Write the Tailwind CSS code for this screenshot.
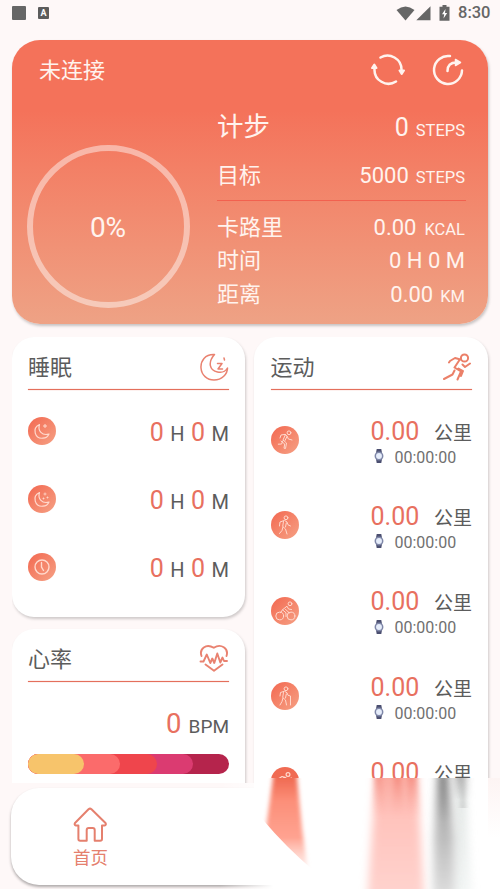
<!DOCTYPE html>
<html lang="zh-CN">
<head>
<meta charset="utf-8">
<title>首页</title>
<script src="https://cdn.jsdelivr.net/npm/@tailwindcss/browser@4"></script>
</head>
<body class="bg-[#fef8f8]">
<svg class="hidden">
  <defs>
    <symbol id="watch" viewBox="0 0 10 14"><path d="M2.700 0h4.600l.7 4H2zM2 10h6l-.7 4H2.700z" fill="#4b4f70"/><circle cx="5" cy="7" r="3.700" fill="#e6edfb" stroke="#7f87a8" stroke-width="1.500"/></symbol>
    <symbol id="run" viewBox="0 0 28 28"><g fill="none" stroke="#ffd9cd" stroke-width="1" stroke-linecap="round" stroke-linejoin="round"><circle cx="18" cy="6.800" r="1.900"/><path d="M9 12l1-3 4-.6 2 1.600 1.400 3 3.600 1M14.500 8.500l-2.500 5.500 3.500 3-1 5.500-1.500-.3.7-4.200-3.700-3M11.500 15l-.8 3-3.400.2M16 10.500l-2 4"/></g></symbol>
    <symbol id="row" viewBox="0 0 28 28"><g fill="none" stroke="#ffd9cd" stroke-width="1.200" stroke-linecap="round" stroke-linejoin="round"><circle cx="17" cy="7.500" r="1.900"/><path d="M8 11.500l3-2 3 .8 2.500 2.200 4-1.500M13 10.500l-2.500 4.500M8 11.500l-1 2"/></g></symbol>
    <symbol id="walk" viewBox="0 0 28 28"><g fill="none" stroke="#ffd9cd" stroke-width="1" stroke-linecap="round" stroke-linejoin="round"><circle cx="15" cy="6.800" r="1.900"/><path d="M8.500 15l.5-4 4.500-1.600 2.500 1.600 1 2.800 2.500 1.200M12.500 10.500l-.8 5 2.800 2.500 1.500 5M12 16l-1 3.500-2.500 3M15.300 12l-.8 4"/></g></symbol>
    <symbol id="bike" viewBox="0 0 28 28"><g fill="none" stroke="#ffd9cd" stroke-width="1" stroke-linecap="round" stroke-linejoin="round"><circle cx="8.700" cy="19" r="3.900"/><circle cx="20" cy="19" r="3.900"/><circle cx="19" cy="6.800" r="1.900"/><path d="M20.500 12.500l-3-.5-1.500-2.800-4.500 3.600 3.500 3v3.700M11.500 12.800l-2 3M14.500 12.500l2 1.500 1.500 2"/></g></symbol>
    <symbol id="hike" viewBox="0 0 28 28"><g fill="none" stroke="#ffd9cd" stroke-width="1" stroke-linecap="round" stroke-linejoin="round"><circle cx="15" cy="6.800" r="1.900"/><path d="M9 14l.5-3.500 4-1.300 2.500 1.600 1 2.500 2.500.7v9M12.500 10.500l-.8 5 2.800 2.500 1 5M12 16l-1 3.500-2 3.500M15.300 12l-.8 4"/></g></symbol>
    <symbol id="moon" viewBox="0 0 28 28"><path d="M11.500 7.500c-8 4-4.500 14.500 3.500 13.700 3 0 4.800-1.700 6-4.200-7 2-11.500-3-9.500-9.500z" fill="none" stroke="#ffd9cd" stroke-width="1.200" stroke-linejoin="round"/></symbol>
  </defs>
</svg>
<div class="relative h-[889px] w-[500px] overflow-hidden font-[Roboto,'Noto_Sans_CJK_SC',sans-serif]">

  <!-- status bar -->
  <div class="flex h-[26px] items-center pl-3 pr-[9px] text-[#666]">
    <div class="h-[14px] w-[14px] rounded-[1px] bg-[#666]"></div>
    <div class="ml-[12px] flex h-[12px] w-[11px] items-center justify-center rounded-[1px] bg-[#5c5c5c] text-[9px] font-bold leading-none text-white">A</div>
    <svg class="ml-auto" width="19" height="15" viewBox="0 0 19 15"><path d="M0.500 4Q9.500-3 18.500 4L9.500 14.500z" fill="#666"/></svg>
    <svg class="ml-[1px]" width="15" height="15" viewBox="0 0 15 15"><path d="M14.500 .3v14H.3z" fill="#666"/></svg>
    <svg class="ml-[8px]" width="11" height="16" viewBox="0 0 11 16"><path d="M3.500 0h4v1.700h3v14H.5v-14h3z" fill="#666"/><path d="M6.500 4L3 9.300h2.200L4.500 13.500 8.200 8H6z" fill="#fff"/></svg>
    <span class="ml-[8px] w-[33px] whitespace-nowrap text-[16.5px] font-medium leading-[26px]">8:30</span>
  </div>

  <!-- steps card -->
  <section class="ml-3 mt-[14px] h-[284px] w-[476px] rounded-[28px] bg-linear-to-b from-[#f4725a] from-25% to-[#eea285] text-[#fff3ee] shadow-[1px_2px_3px_#00000038]">
    <div class="flex h-[60px] items-center pl-[27px] pr-[23px]">
      <span class="mt-[2px] text-[22px] leading-[30px]">未连接</span>
      <svg class="ml-auto" width="36" height="34" viewBox="0 0 36 34" fill="none" stroke="#fff3ee" stroke-width="2.500" stroke-linecap="round" stroke-linejoin="round"><path d="M10.500 4.500a14 14 0 0 1 21 12M26 28.500A14 14 0 0 1 4.500 16"/><path d="M29.500 17.500h4.500l-2.300 3.500zM2 15h4.500L4.300 11.500z" fill="#fff3ee" stroke-width="2"/></svg>
      <svg class="ml-[25px]" width="34" height="34" viewBox="0 0 34 34" fill="none" stroke="#fff3ee" stroke-width="2.500" stroke-linecap="round" stroke-linejoin="round"><path d="M19 3.100A14 14 0 1 0 31 17.500M16.500 18c0-6 3-8.500 9-8.500"/><path d="M24.500 6.500v6l5-3z" fill="#fff3ee" stroke-width="1.500"/></svg>
    </div>
    <div class="flex">
      <div class="ml-[15px] mt-[45px] flex h-[163px] w-[163px] items-center justify-center rounded-full border-[6.5px] border-white/45 pr-px pt-[2px] text-[28px] leading-[34px]">0%</div>
      <div class="ml-[27px] mt-[10px] w-[249px] text-[22px] leading-[33px]">
        <div class="flex h-[49px] items-baseline pr-px text-[25px] leading-[34px]"><span class="text-[26.5px]">计步</span><span class="ml-auto">0</span><span class="ml-[7px] text-[16.5px]">STEPS</span></div>
        <div class="flex h-[41px] items-baseline pr-px"><span>目标</span><span class="ml-auto">5000</span><span class="ml-[7px] text-[16.5px]">STEPS</span></div>
        <div class="mb-[10px] h-px bg-[#f2614f]"></div>
        <div class="flex h-[33px] items-baseline pr-px"><span>卡路里</span><span class="ml-auto">0.00</span><span class="ml-[8px] text-[16.5px]">KCAL</span></div>
        <div class="flex h-[33.5px] items-baseline pr-px"><span>时间</span><span class="ml-auto">0 H 0 M</span></div>
        <div class="flex h-[33px] items-baseline pr-px"><span>距离</span><span class="ml-auto">0.00</span><span class="ml-[7px] text-[16.5px]">KM</span></div>
      </div>
    </div>
  </section>

  <div class="ml-3 mt-[13px] flex h-[446px] gap-[9px] overflow-hidden pr-1 text-[#5c5c5c]">
    <div class="w-[233px] shrink-0">
      <!-- sleep card -->
      <section class="h-[280px] rounded-[22px] bg-white px-4 pt-px shadow-[1px_2px_3px_#00000030]">
        <div class="flex h-[51px] items-center pt-[8px]">
          <span class="text-[22px] leading-[30px]">睡眠</span>
          <svg class="ml-auto" width="29" height="29" viewBox="0 0 29 29" fill="none" stroke="#e98270" stroke-width="1.500" stroke-linejoin="round" stroke-linecap="round"><path d="M14.500 1.500C5 1 .5 8 1 15c.5 7 6 12 13 12 8 0 13.500-6 13.500-12-2 3.500-6 4.800-10 4-8-1.500-10-9.500-3-17.500z"/><path d="M17.500 10.500h4.500l-4 5.500h4.500M24 5l.5 2"/></svg>
        </div>
        <div class="h-px bg-[#e46f5c] shadow-[0_0_1px_#e46f5c]"></div>
        <div class="mt-[8px] flex h-[68px] items-center text-[20px] leading-[32px]">
          <div class="mr-auto mt-[-2px] flex h-7 w-7 rounded-full bg-linear-to-br from-[#f26750] to-[#f5a084]"><svg width="28" height="28"><use href="#moon"/><path d="M17 7v4M15 9h4" stroke="#ffd9cd"/></svg></div>
          <div class="mt-[3px] flex items-baseline gap-[6.5px]"><span class="text-[25px] text-[#e8705f]">0</span><span>H</span><span class="text-[25px] text-[#e8705f]">0</span><span>M</span></div>
        </div>
        <div class="flex h-[68px] items-center text-[20px] leading-[32px]">
          <div class="mr-auto mt-[-2px] flex h-7 w-7 rounded-full bg-linear-to-br from-[#f26750] to-[#f5a084]"><svg width="28" height="28"><use href="#moon"/><path d="M17 7.500v3M15.500 9h3M19.500 11.500v2M18.500 12.500h2M15.500 12.500v2M14.500 13.500h2" stroke="#ffd9cd" stroke-width=".8"/></svg></div>
          <div class="mt-[3px] flex items-baseline gap-[6.5px]"><span class="text-[25px] text-[#e8705f]">0</span><span>H</span><span class="text-[25px] text-[#e8705f]">0</span><span>M</span></div>
        </div>
        <div class="flex h-[68px] items-center text-[20px] leading-[32px]">
          <div class="mr-auto mt-[-2px] flex h-7 w-7 rounded-full bg-linear-to-br from-[#f26750] to-[#f5a084]"><svg width="28" height="28" fill="none" stroke="#ffd9cd" stroke-width="1.400" stroke-linecap="round"><circle cx="14" cy="14" r="7"/><path d="M13.500 9.500V14l2 3.500"/></svg></div>
          <div class="mt-[3px] flex items-baseline gap-[6.5px]"><span class="text-[25px] text-[#e8705f]">0</span><span>H</span><span class="text-[25px] text-[#e8705f]">0</span><span>M</span></div>
        </div>
      </section>
      <!-- heart rate card -->
      <section class="mt-3 h-[200px] rounded-[22px] bg-white px-4 pt-px shadow-[1px_2px_3px_#00000030]">
        <div class="flex h-[51px] items-center pt-[8px]">
          <span class="text-[22px] leading-[30px]">心率</span>
          <svg class="ml-auto mt-[-4px]" width="30" height="28" viewBox="0 0 30 28" fill="none" stroke="#e98270" stroke-width="1.900" stroke-linejoin="round" stroke-linecap="round"><path d="M2.500 12C0 5 7 -1 14.800 3.800 22 -1 30 4.500 27.500 12M6.500 20.500l8.500 6.300 8.500-6.300"/><path d="M1.500 17.500h3l3.300-7 3.500 8.500 2-4.500 2 4.500 3-9.500 3 9 2.200-5 1.500 3.500h3"/></svg>
        </div>
        <div class="h-px bg-[#e46f5c] shadow-[0_0_1px_#e46f5c]"></div>
        <div class="mt-[24px] flex h-[36px] items-baseline justify-end text-[19px] leading-[36px]"><span class="text-[27.5px] text-[#e8705f]">0</span><span class="ml-[7px]">BPM</span></div>
        <div class="mt-[12px] flex h-5 w-[201px] overflow-hidden rounded-full bg-[linear-gradient(90deg,#f7c46b_40px,#b5244c_40px)]">
          <div class="h-5 w-[164.5px] rounded-r-full bg-[#db3b71]"><div class="h-5 w-[129px] rounded-r-full bg-[#ef454c]"><div class="h-5 w-[92px] rounded-r-full bg-[#fb6b6b]"><div class="h-5 w-[56px] rounded-r-full bg-[#f7c46b]"></div></div></div></div>
        </div>
      </section>
    </div>

    <!-- sport card -->
    <section class="h-[520px] w-[233.5px] shrink-0 rounded-[22px] bg-white pl-[16.5px] pr-[15.5px] pt-px shadow-[1px_2px_3px_#00000030]">
      <div class="flex h-[51px] items-center pt-[8px]">
        <span class="text-[22px] leading-[30px]">运动</span>
        <svg class="ml-auto" width="29" height="29" viewBox="0 0 29 29" fill="none" stroke="#eb8069" stroke-width="2" stroke-linecap="round" stroke-linejoin="round"><circle cx="21.500" cy="5" r="3.600"/><path d="M7 8l5-3 5.500 1.500M7 8l-1 1.500M16.500 7l-5 7.500 6.500 4-3.500 8M11.500 17.500l-2 4-8.500 4.500M19.500 11.500l2.500 2.500 5-3.500M15.500 15.500l4.500 2.500-2 5"/></svg>
      </div>
      <div class="mb-[10px] h-px bg-[#e46f5c] shadow-[0_0_1px_#e46f5c]"></div>
      <div class="flex h-[85.3px] items-center"><div class="mt-[-5px] h-7 w-7 rounded-full bg-linear-to-br from-[#f26750] to-[#f5a084]"><svg width="28" height="28"><use href="#run"/></svg></div>
        <div class="ml-auto w-[101.5px]"><div class="flex h-[30px] items-baseline justify-between pt-px leading-[29px]"><span class="text-[25px] text-[#e8705f]">0.00</span><span class="text-[19px]">公里</span></div><div class="flex items-center text-[16px] leading-6 text-[#707070]"><svg class="ml-[3px] mr-[11px] mt-[-3px]" width="10" height="14"><use href="#watch"/></svg>00:00:00</div></div></div>
      <div class="flex h-[85.3px] items-center"><div class="mt-[-5px] h-7 w-7 rounded-full bg-linear-to-br from-[#f26750] to-[#f5a084]"><svg width="28" height="28"><use href="#walk"/></svg></div>
        <div class="ml-auto w-[101.5px]"><div class="flex h-[30px] items-baseline justify-between pt-px leading-[29px]"><span class="text-[25px] text-[#e8705f]">0.00</span><span class="text-[19px]">公里</span></div><div class="flex items-center text-[16px] leading-6 text-[#707070]"><svg class="ml-[3px] mr-[11px] mt-[-3px]" width="10" height="14"><use href="#watch"/></svg>00:00:00</div></div></div>
      <div class="flex h-[85.3px] items-center"><div class="mt-[-5px] h-7 w-7 rounded-full bg-linear-to-br from-[#f26750] to-[#f5a084]"><svg width="28" height="28"><use href="#bike"/></svg></div>
        <div class="ml-auto w-[101.5px]"><div class="flex h-[30px] items-baseline justify-between pt-px leading-[29px]"><span class="text-[25px] text-[#e8705f]">0.00</span><span class="text-[19px]">公里</span></div><div class="flex items-center text-[16px] leading-6 text-[#707070]"><svg class="ml-[3px] mr-[11px] mt-[-3px]" width="10" height="14"><use href="#watch"/></svg>00:00:00</div></div></div>
      <div class="flex h-[85.3px] items-center"><div class="mt-[-5px] h-7 w-7 rounded-full bg-linear-to-br from-[#f26750] to-[#f5a084]"><svg width="28" height="28"><use href="#hike"/></svg></div>
        <div class="ml-auto w-[101.5px]"><div class="flex h-[30px] items-baseline justify-between pt-px leading-[29px]"><span class="text-[25px] text-[#e8705f]">0.00</span><span class="text-[19px]">公里</span></div><div class="flex items-center text-[16px] leading-6 text-[#707070]"><svg class="ml-[3px] mr-[11px] mt-[-3px]" width="10" height="14"><use href="#watch"/></svg>00:00:00</div></div></div>
      <div class="flex h-[85.3px] items-center"><div class="mt-[-5px] h-7 w-7 rounded-full bg-[#f06b53]"><svg width="28" height="28"><use href="#row"/></svg></div>
        <div class="ml-auto w-[101.5px]"><div class="flex h-[54px] items-baseline justify-between pt-px leading-[29px]"><span class="text-[25px] text-[#e8705f]">0.00</span><span class="text-[19px]">公里</span></div></div></div>
    </section>
  </div>

  <!-- bottom navigation, over the scrolling content -->
  <nav class="absolute left-[11px] top-[788px] flex h-[97px] w-[320px] flex-col rounded-[28px] bg-white pl-[62px] pt-[18.5px] text-[#e5806e] shadow-[0_2px_3px_#00000050]">
    <svg width="34" height="35" viewBox="0 0 34 35" fill="none" stroke="currentColor" stroke-width="2" stroke-linejoin="round" stroke-linecap="round"><path d="M15.500 2.200q1.500-1.200 3 0L32.500 16q1 2-1 2.500h-2.500V32q0 1.800-1.800 1.800h-5.500V23q0-2-2-2h-4q-2 0-2 2v10.800H7.200q-1.800 0-1.800-1.800V18.500H3q-2-.5-1-2.500z"/></svg>
    <span class="mt-[3px] text-[17.5px] leading-[26px]">首页</span>
  </nav>

  <!-- streaks fading down from the content edge -->
  <svg class="absolute left-0 top-[778px]" width="500" height="111" viewBox="0 0 500 111">
    <defs>
      <linearGradient id="edge"><stop offset="0" stop-color="#fff" stop-opacity="0"/><stop offset=".19" stop-color="#fff"/></linearGradient>
      <linearGradient id="right" x2="0" y2="1"><stop offset="0" stop-color="#fdf4f3"/><stop offset="1" stop-color="#fff"/></linearGradient>
      <linearGradient id="orange" gradientUnits="userSpaceOnUse" x1="0" y1="0" x2="0" y2="92"><stop offset="0" stop-color="#f06b53"/><stop offset=".25" stop-color="#fc8f79"/><stop offset=".65" stop-color="#ffa391"/><stop offset="1" stop-color="#ffcfc5" stop-opacity=".3"/></linearGradient>
      <linearGradient id="pink" x2="0" y2="1"><stop offset="0" stop-color="#fbaaa0"/><stop offset=".35" stop-color="#ffc3bc"/><stop offset="1" stop-color="#ffd2cd"/></linearGradient>
      <linearGradient id="core" x2="0" y2="1"><stop offset="0" stop-color="#ef6f60"/><stop offset="1" stop-color="#ffb3aa" stop-opacity="0"/></linearGradient>
      <linearGradient id="grey" x2="0" y2="1"><stop offset="0" stop-color="#777"/><stop offset=".4" stop-color="#b4b4b4"/><stop offset="1" stop-color="#dadada"/></linearGradient>
      <linearGradient id="grey2" x2="0" y2="1"><stop offset="0" stop-color="#888"/><stop offset=".2" stop-color="#dde2e0"/><stop offset="1" stop-color="#eff3f2"/></linearGradient>
      <filter id="soft" x="-60%" y="0" width="220%" height="100%"><feGaussianBlur stdDeviation="4 0"/></filter>
      <filter id="fine" x="-60%" y="0" width="220%" height="100%"><feGaussianBlur stdDeviation="2 0"/></filter>
      <clipPath id="cut"><path d="M245 0h100v111h-15L313 92Q285 68 264 43L245 20z"/></clipPath>
    </defs>
    <path d="M220 5H500V111H220z" fill="url(#edge)"/>
    <path d="M254 0H488V20H254z" fill="#fff"/>
    <path d="M488 0h12v60h-12z" fill="url(#right)"/>
    <path d="M376 0h41l7 111h-56z" fill="url(#pink)" filter="url(#soft)"/>
    <path d="M374 0h8l2 42h-11zM394 0h7l3 42h-12zM408 0h9l3 42h-12z" fill="url(#core)" opacity=".45" filter="url(#fine)"/>
    <path d="M456 0h9l6 111h-19z" fill="url(#grey2)" opacity=".8" filter="url(#soft)"/>
    <path d="M462 0h2l2 30h-6z" fill="#999" opacity=".3" filter="url(#fine)"/>
    <path d="M438 0h10l6 60 1 51h-22l1-51z" fill="url(#grey)" filter="url(#soft)"/>
    <g clip-path="url(#cut)"><path d="M273 0h24l5 50 8 61h-44v-61z" fill="url(#orange)" filter="url(#fine)"/></g>
  </svg>
</div>
</body>
</html>
